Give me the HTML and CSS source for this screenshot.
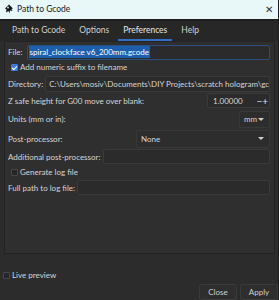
FILE: index.html
```html
<!DOCTYPE html>
<html lang="en">

<head>
    <meta charset="UTF-8">
    <meta name="viewport" content="width=device-width, initial-scale=1.0">
    <title>Path to Gcode</title>
    <link rel="stylesheet" href="styles.css">
</head>

<body>
    <div class="window">
        <!-- 标题栏 -->
        <div class="titlebar">
            <svg class="app-icon" width="10" height="10" viewBox="0 0 10 10">
                <path d="M5 0.5 L9 4.5 L7.5 5 L8.5 7 L6 6.5 L5.5 9.5 L4.5 7 L2 8.5 L2.5 5.5 L1 4.5 Z" fill="#1a1a1a" />
                <circle cx="4" cy="3.5" r="0.9" fill="#e8f7f7" />
            </svg>
            <span class="title">Path to Gcode</span>
            <span class="close-x">✕</span>
        </div>

        <!-- 标签页 -->
        <div class="tabs">
            <span class="tab">Path to Gcode</span>
            <span class="tab">Options</span>
            <span class="tab active">Preferences</span>
            <span class="tab">Help</span>
        </div>

        <div class="panel">
            <div class="row row-file">
                <span class="label">File:</span>
                <div class="input grow"><span class="selected">spiral_clockface v6_200mm.gcode</span></div>
            </div>
            <div class="row row-check">
                <span class="check on"></span>
                <span class="label">Add numeric suffix to filename</span>
            </div>
            <div class="row row-dir">
                <span class="label">Directory:</span>
                <div class="input grow clip">C:\Users\mosiv\Documents\DIY Projects\scratch hologram\gco</div>
            </div>
            <div class="row row-z">
                <span class="label">Z safe height for G00 move over blank:</span>
                <div class="spin">
                    <span class="spin-val">1.00000</span>
                    <span class="spin-btn">−+</span>
                </div>
            </div>
            <div class="row row-units">
                <span class="label">Units (mm or in):</span>
                <div class="combo small">mm<span class="arrow"></span></div>
            </div>
            <div class="row row-post">
                <span class="label">Post-processor:</span>
                <div class="combo wide">None<span class="arrow"></span></div>
            </div>
            <div class="row row-add">
                <span class="label">Additional post-processor:</span>
                <div class="input grow"></div>
            </div>
            <div class="row row-gen">
                <span class="check"></span>
                <span class="label">Generate log file</span>
            </div>
            <div class="row row-log">
                <span class="label">Full path to log file:</span>
                <div class="input grow"></div>
            </div>
        </div>

        <div class="live">
            <span class="check"></span>
            <span class="label">Live preview</span>
        </div>

        <div class="buttons">
            <span class="btn">Close</span>
            <span class="btn">Apply</span>
        </div>
    </div>
</body>

</html>
```

FILE: styles.css
```css
* {
    margin: 0;
    padding: 0;
    box-sizing: border-box;
}

body {
    width: 279px;
    height: 300px;
    overflow: hidden;
    background-color: #2c2c2c;
    font-family: Lato, "Open Sans", sans-serif;
    font-size: 8px;
    color: #d6d6d6;
}

.window {
    width: 279px;
    height: 300px;
    border-right: 1px solid #1e1e1e;
    display: flex;
    flex-direction: column;
}

.titlebar {
    height: 19px;
    background-color: #e8f7f7;
    display: flex;
    align-items: center;
    padding-left: 4px;
    color: #1a1a1a;
}

.app-icon {
    margin-right: 3px;
}

.title {
    font-size: 8.5px;
}

.close-x {
    margin-left: auto;
    margin-right: 5px;
    font-size: 10px;
    color: #333;
}

.tabs {
    height: 22px;
    border-top: 2px solid #1f1f1f;
    background-color: #272727;
    display: flex;
    align-items: stretch;
    padding-left: 7px;
}

.tab {
    display: flex;
    align-items: center;
    padding: 0 5px;
    margin-right: 4px;
    color: #d0d0d0;
    border-bottom: 2px solid transparent;
    font-size: 8.5px;
}

.tab.active {
    border-bottom-color: #2f6fc4;
    color: #e6e6e6;
}

.panel {
    margin: 0 3px 0 4px;
    height: 215px;
    background-color: #2f2f2f;
    border: 1px solid #232323;
    padding: 2px 4px 0 3px;
}

.row {
    display: flex;
    align-items: center;
    height: 15px;
}

.label {
    white-space: nowrap;
    margin-right: 2px;
}

.input {
    height: 15px;
    background-color: #2b2b2b;
    border: 1px solid #3a3a3a;
    border-radius: 2px;
    padding-left: 3px;
    display: flex;
    align-items: center;
    white-space: nowrap;
    overflow: hidden;
}

.grow {
    flex: 1;
}

.selected {
    background-color: #1e5fad;
    color: #ffffff;
    padding: 1px 1px;
}

.row-file {
    height: 15px;
    margin-top: 1px;
}

.row-file .label {
    margin-right: 4px;
}

.row-file .input {
    border-color: #2b4f7c;
    padding-left: 1px;
}

.row-dir {
    margin-top: 1px;
    height: 17px;
}

.row-dir .input {
    height: 16px;
}

.row-z {
    height: 16px;
}

.row-units {
    height: 17px;
    margin-top: 2px;
}

.row-post {
    height: 18px;
    margin-top: 2px;
}

.row-add {
    margin-top: 1px;
    height: 16px;
}

.row-log {
    height: 16px;
}

.check {
    width: 7px;
    height: 7px;
    border: 1px solid #474747;
    border-radius: 1px;
    background-color: #262626;
    margin: 0 2px 0 3px;
    flex-shrink: 0;
    position: relative;
}

.check.on {
    background-color: #3a7ae0;
    border-color: #3a7ae0;
}

.check.on::after {
    content: "";
    position: absolute;
    left: 1px;
    top: 0;
    width: 2px;
    height: 4px;
    border: solid #ffffff;
    border-width: 0 1px 1px 0;
    transform: rotate(45deg);
}

.spin {
    margin-left: auto;
    width: 63px;
    height: 15px;
    border: 1px solid #3a3a3a;
    border-radius: 2px;
    background-color: #2b2b2b;
    display: flex;
    align-items: center;
    padding-left: 5px;
}

.spin-btn {
    margin-left: auto;
    margin-right: 1px;
    font-size: 10px;
    color: #e0e0e0;
}

.combo {
    height: 17px;
    background-color: #2d2d2d;
    border: 1px solid #383838;
    border-radius: 2px;
    display: flex;
    align-items: center;
    padding-left: 4px;
    padding-right: 5px;
}

.combo.small {
    margin-left: auto;
    width: 31px;
}

.combo.wide {
    margin-left: auto;
    width: 134px;
    height: 18px;
}

.arrow {
    margin-left: auto;
    width: 0;
    height: 0;
    border-left: 3px solid transparent;
    border-right: 3px solid transparent;
    border-top: 3px solid #d0d0d0;
}

.live {
    display: flex;
    align-items: center;
    height: 14px;
    margin-top: 14px;
    padding-left: 3px;
}

.live .check {
    margin-left: 0;
}

.buttons {
    display: flex;
    justify-content: flex-end;
    gap: 3px;
    margin-top: 2px;
}

.btn {
    height: 16px;
    width: 38px;
    border: 1px solid #3a3a3a;
    border-radius: 2px;
    background-color: #2e2e2e;
    display: flex;
    align-items: center;
    justify-content: center;
    color: #d0d0d0;
}
```
